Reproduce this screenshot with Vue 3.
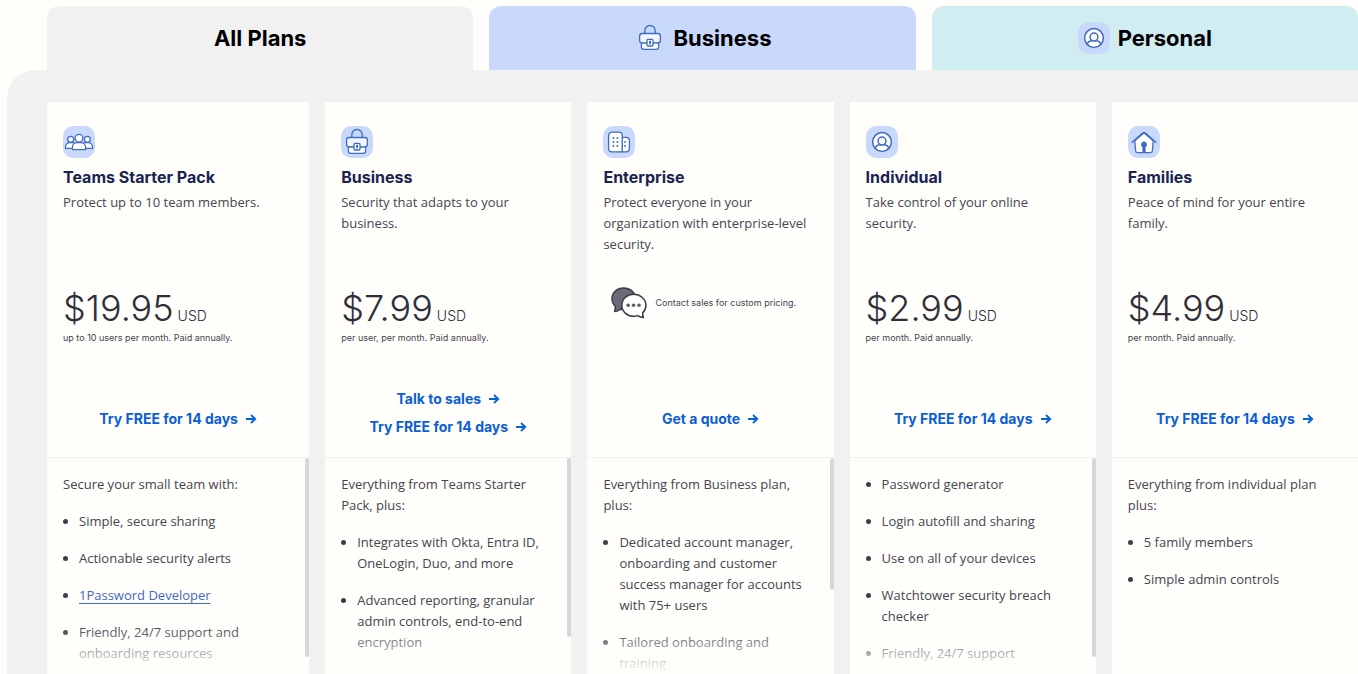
<script setup>
const tabs = [
  { label: 'All Plans', tone: 'neutral' },
  { label: 'Business', tone: 'blue', icon: 'briefcase' },
  { label: 'Personal', tone: 'teal', icon: 'person' },
]

const plans = [
  {
    name: 'Teams Starter Pack',
    icon: 'team',
    description: 'Protect up to 10 team members.',
    price: '$19.95',
    terms: 'up to 10 users per month. Paid annually.',
    actions: ['Try FREE for 14 days'],
    intro: 'Secure your small team with:',
    features: [
      { text: 'Simple, secure sharing' },
      { text: 'Actionable security alerts' },
      { text: '1Password Developer', link: true },
      { text: 'Friendly, 24/7 support and onboarding resources' },
    ],
    thumb: 92,
  },
  {
    name: 'Business',
    icon: 'briefcase',
    description: 'Security that adapts to your business.',
    price: '$7.99',
    terms: 'per user, per month. Paid annually.',
    actions: ['Talk to sales', 'Try FREE for 14 days'],
    intro: 'Everything from Teams Starter Pack, plus:',
    features: [
      { text: 'Integrates with Okta, Entra ID, OneLogin, Duo, and more' },
      { text: 'Advanced reporting, granular admin controls, end-to-end encryption' },
    ],
    thumb: 83,
  },
  {
    name: 'Enterprise',
    icon: 'building',
    description: 'Protect everyone in your organization with enterprise-level security.',
    contact: 'Contact sales for custom pricing.',
    actions: ['Get a quote'],
    intro: 'Everything from Business plan, plus:',
    features: [
      { text: 'Dedicated account manager, onboarding and customer success manager for accounts with 75+ users' },
      { text: 'Tailored onboarding and training' },
    ],
    thumb: 61,
  },
  {
    name: 'Individual',
    icon: 'person',
    description: 'Take control of your online security.',
    price: '$2.99',
    terms: 'per month. Paid annually.',
    actions: ['Try FREE for 14 days'],
    features: [
      { text: 'Password generator' },
      { text: 'Login autofill and sharing' },
      { text: 'Use on all of your devices' },
      { text: 'Watchtower security breach checker' },
      { text: 'Friendly, 24/7 support' },
    ],
    thumb: 92,
  },
  {
    name: 'Families',
    icon: 'home',
    description: 'Peace of mind for your entire family.',
    price: '$4.99',
    terms: 'per month. Paid annually.',
    actions: ['Try FREE for 14 days'],
    intro: 'Everything from individual plan plus:',
    features: [{ text: '5 family members' }, { text: 'Simple admin controls' }],
  },
]
</script>

<template>
  <svg class="sprite" aria-hidden="true">
    <symbol id="icon-team" viewBox="0 0 32 32">
      <g fill="#fffefb" stroke="#3f6cc4" stroke-width="1.3" stroke-linejoin="round">
        <circle cx="7.7" cy="13.3" r="3" />
        <circle cx="24.3" cy="13.3" r="3" />
        <path d="M2.5 22.3v-1.3c0-2.5 2-4.3 4.4-4.3h2.2c2.4 0 4.4 1.8 4.4 4.3v1.3z" />
        <path d="M18.5 22.3v-1.3c0-2.5 2-4.3 4.4-4.3h2.2c2.4 0 4.4 1.8 4.4 4.3v1.3z" />
        <path d="M9.4 23.6v-2.2c0-2.9 2.2-4.8 4.8-4.8h3.6c2.6 0 4.8 1.9 4.8 4.8v2.2z" />
        <circle cx="16" cy="12.2" r="3.8" />
      </g>
    </symbol>
    <symbol id="icon-briefcase" viewBox="0 0 32 32">
      <g stroke="#3f6cc4" stroke-width="1.3" stroke-linejoin="round">
        <path d="M10.8 11.5V8.7a5.2 5.2 0 0 1 10.4 0v2.8" fill="none" />
        <path d="M7.4 20.8v4.2a2.4 2.4 0 0 0 2.4 2.4h12.4a2.4 2.4 0 0 0 2.4-2.4v-4.2z" fill="#fffefb" />
        <rect x="5.6" y="11.5" width="20.8" height="9.3" rx="2.6" fill="#f4f6fc" />
        <rect x="13" y="17.4" width="6" height="6.6" rx="1" fill="#fffefb" />
      </g>
      <path d="M15 18.8h2v1.6l-.4 2.2h-1.2l-.4-2.2z" fill="#3f6cc4" />
    </symbol>
    <symbol id="icon-building" viewBox="0 0 32 32">
      <g fill="#fffefb" stroke="#3f6cc4" stroke-width="1.3" stroke-linejoin="round">
        <path d="M19 11.3h4.2a3.2 3.2 0 0 1 3.2 3.2v8.4a3 3 0 0 1-3 3H19z" />
        <path d="M9 6.2h6.8a3.4 3.4 0 0 1 3.4 3.4v16.2H9a3.4 3.4 0 0 1-3.4-3.4V9.6A3.4 3.4 0 0 1 9 6.2z" />
      </g>
      <path
        d="M10.4 12v.1M14.4 12v.1M10.4 16v.1M14.4 16v.1M10.4 20v.1M14.4 20v.1M22 16v.1M22 20v.1"
        stroke="#3f6cc4"
        stroke-width="1.9"
        stroke-linecap="round"
      />
    </symbol>
    <symbol id="icon-person" viewBox="0 0 32 32">
      <g fill="#fffefb" stroke="#3f6cc4" stroke-width="1.5">
        <circle cx="16" cy="16" r="9.4" />
        <path d="M9.3 22.6c.5-2.6 2.4-3.9 4.6-3.9h4.2c2.200 0 4.100 1.300 4.600 3.900" fill="none" />
        <circle cx="16" cy="15" r="3.9" />
      </g>
    </symbol>
    <symbol id="icon-home" viewBox="0 0 32 32">
      <path
        d="M6.8 14.8 16 6.8l9.2 8-.8 10a2 2 0 0 1-2 1.8H9.600a2 2 0 0 1-2-1.800z"
        fill="#fffefb"
        stroke="#3f6cc4"
        stroke-width="1.3"
      />
      <path
        d="M4.2 16.300 14.700 7a2 2 0 0 1 2.600 0l10.500 9.300"
        fill="none"
        stroke="#3f6cc4"
        stroke-width="1.5"
        stroke-linecap="round"
      />
      <path d="M16 15.600a3 3 0 0 1 1.600 5.500v5.500h-3.200v-5.500A3 3 0 0 1 16 15.600z" fill="#3f6cc4" />
    </symbol>
    <symbol id="icon-chat" viewBox="0 0 36 32">
      <g stroke="#3c3c49" stroke-width="1.5" stroke-linejoin="round">
        <path
          d="M12.600.9C6.200.9 1 5.500 1 11.500c0 3 1.100 5.600 3.200 7.500.2 2.200 0 4-.6 5.400 2.300-.1 4.200-.9 5.700-2.200 1 .2 2.100.3 3.300.3 6.500 0 11.700-4.800 11.700-11S19.100.9 12.600.9z"
          fill="#6c6c78"
        />
        <path
          d="M22.700 7.300c-6.700 0-11.900 4.800-11.900 11s5.200 11 11.900 11c1.500 0 2.900-.2 4.100-.7 1.600 1.200 3.500 1.900 5.700 2-.7-1.300-.9-2.900-.8-4.700 2-1.900 3.200-4.500 3.200-7.600 0-6.200-5.500-11-12.200-11z"
          fill="#fffefb"
        />
      </g>
      <g fill="#5f5f6b">
        <circle cx="17.200" cy="18.200" r="1.800" />
        <circle cx="22.600" cy="18.200" r="1.800" />
        <circle cx="28" cy="18.200" r="1.800" />
      </g>
    </symbol>
    <symbol id="icon-arrow" viewBox="0 0 12 12">
      <path d="M1 6h9M6 2l4.200 4L6 10" fill="none" stroke="#0764d8" stroke-width="1.900" />
    </symbol>
  </svg>

  <main class="page">
    <nav class="tabs" aria-label="Plan type">
      <button v-for="tab in tabs" :key="tab.label" type="button" class="tab" :class="tab.tone">
        <span v-if="tab.icon" class="tile"><svg><use :href="'#icon-' + tab.icon" /></svg></span>
        {{ tab.label }}
      </button>
    </nav>

    <section class="panel">
      <article v-for="plan in plans" :key="plan.name" class="card">
        <header class="summary">
          <span class="tile"><svg><use :href="'#icon-' + plan.icon" /></svg></span>
          <h2>{{ plan.name }}</h2>
          <p class="description">{{ plan.description }}</p>
          <div v-if="plan.price" class="pricing">
            <p class="price">{{ plan.price }}<span class="currency">USD</span></p>
            <p class="terms">{{ plan.terms }}</p>
          </div>
          <div v-else class="pricing contact">
            <svg class="chat"><use href="#icon-chat" /></svg>
            <p class="terms">{{ plan.contact }}</p>
          </div>
          <div class="actions" :class="{ stacked: plan.actions.length > 1 }">
            <a v-for="action in plan.actions" :key="action" href="#">
              {{ action }}<svg class="arrow"><use href="#icon-arrow" /></svg>
            </a>
          </div>
        </header>
        <div class="details">
          <p v-if="plan.intro">{{ plan.intro }}</p>
          <ul>
            <li v-for="feature in plan.features" :key="feature.text">
              <a v-if="feature.link" href="#">{{ feature.text }}</a>
              <template v-else>{{ feature.text }}</template>
            </li>
          </ul>
          <span v-if="plan.thumb" class="thumb" :style="{ height: plan.thumb + '%' }"></span>
        </div>
      </article>
    </section>
  </main>
</template>

<style>
body {
  background: #fffefb;
}
</style>

<style scoped>
.sprite {
  position: absolute;
  width: 0;
  height: 0;
}

.page {
  box-sizing: border-box;
  display: flex;
  flex-direction: column;
  height: 100vh;
  padding: 6px 0 0 7px;
  overflow: hidden;
  background: #fffefb;
  color: #454550;
  font-family: 'Open Sans', 'Noto Sans', sans-serif;
  font-size: 13px;
  line-height: 21px;
}

p,
h2,
ul {
  margin: 0;
  padding: 0;
}

.tabs {
  display: grid;
  grid-template-columns: repeat(3, 1fr);
  gap: 16px;
  padding-left: 40px;
}

.tab {
  display: flex;
  align-items: center;
  justify-content: center;
  gap: 8px;
  height: 64px;
  padding: 0;
  border: 0;
  border-radius: 12px 12px 0 0;
  color: #000;
  font: 700 22px/32px Inter, sans-serif;
}

.neutral {
  background: #f1f1f2;
}

.blue {
  background: #c9d9fb;
}

.teal {
  background: #d0edf1;
}

.tile {
  display: block;
  width: 32px;
  height: 32px;
  border-radius: 10px;
  background: #c9d9fb;
}

.tile svg {
  display: block;
  width: 32px;
  height: 32px;
}

.panel {
  display: flex;
  flex: 1;
  gap: 16px;
  min-height: 0;
  padding: 32px 0 0 40px;
  border-radius: 28px 0 0 0;
  background: #f1f1f2;
}

.card {
  display: flex;
  flex: 1 1 0;
  flex-direction: column;
  min-width: 0;
  background: #fffefb;
}

.card:first-child {
  flex-basis: 16px;
}

.summary {
  padding: 24px 16px 0;
  border-bottom: 1px solid #f0f0f1;
}

h2 {
  margin: 8px 0 4px;
  color: #1a2452;
  font: 700 16px/22px Inter, sans-serif;
}

.description {
  min-height: 63px;
}

.pricing {
  box-sizing: border-box;
  height: 126px;
  padding-top: 33px;
}

.price {
  color: #2f2f3a;
  font-family: Inter, sans-serif;
  font-weight: 300;
  font-size: 36px;
  line-height: 40px;
}

.currency {
  margin-left: 4px;
  font-size: 14px;
  line-height: 1;
}

.terms {
  font-family: Inter, sans-serif;
  font-size: 9px;
  line-height: 20px;
}

.contact {
  display: flex;
  align-items: flex-start;
  gap: 8px;
  padding: 32px 0 0 8px;
}

.chat {
  flex: none;
  width: 36px;
  height: 32px;
}

.contact .terms {
  line-height: 32px;
}

.actions {
  box-sizing: border-box;
  display: flex;
  flex-direction: column;
  align-items: center;
  justify-content: center;
  height: 76px;
}

.stacked {
  padding-bottom: 12px;
}

.actions a {
  display: flex;
  align-items: center;
  gap: 7px;
  color: #0b5fd6;
  font: 700 14px/28px Inter, sans-serif;
  text-decoration: none;
}

.arrow {
  width: 12px;
  height: 12px;
}

.details {
  position: relative;
  flex: 1;
  min-height: 0;
  padding: 16px 20px 0 16px;
  overflow: hidden;
}

.details::after {
  position: absolute;
  right: 0;
  bottom: 0;
  left: 0;
  height: 48px;
  background: linear-gradient(rgba(255, 254, 251, 0), #fffefb);
  content: '';
}

.details p {
  margin-bottom: 16px;
}

ul {
  list-style: none;
}

li {
  position: relative;
  margin-bottom: 16px;
  padding-left: 16px;
}

li::before {
  position: absolute;
  top: 8px;
  left: 0;
  width: 5px;
  height: 5px;
  border-radius: 50%;
  background: #3d3d4a;
  content: '';
}

li a {
  color: #4468c4;
  text-underline-offset: 3px;
}

.thumb {
  position: absolute;
  top: 0;
  right: 0;
  z-index: 1;
  width: 4px;
  border-radius: 2px;
  background: #d7d7d8;
}
</style>
